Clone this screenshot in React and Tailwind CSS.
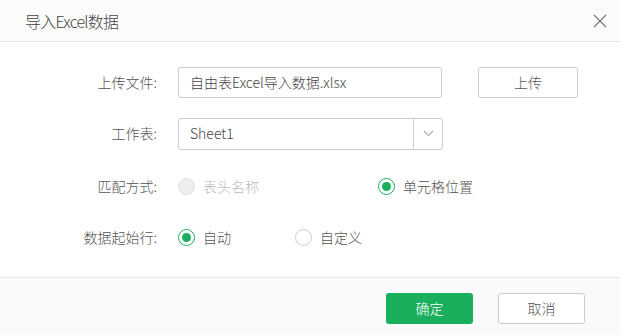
import React, { useState } from 'react';

const font = { fontFamily: '"Noto Sans CJK SC", "Noto Sans", sans-serif' };

const Radio = ({ checked, disabled, label, onClick }) => (
    <button
        type="button"
        onClick={disabled ? undefined : onClick}
        className="flex items-center gap-[8px] h-[31px]"
    >
        <span
            className={
                'flex items-center justify-center w-[17px] h-[17px] rounded-full border ' +
                (disabled
                    ? 'bg-[#eeeeee] border-[#dddddd]'
                    : checked
                        ? 'bg-white border-[#1aaf5d]'
                        : 'bg-white border-[#cccccc]')
            }
        >
            {checked && <span className="w-[9px] h-[9px] rounded-full bg-[#1aaf5d]" />}
        </span>
        <span className={'text-[14px] ' + (disabled ? 'text-[#bbbbbb]' : 'text-[#555555]')}>{label}</span>
    </button>
);

const Label = ({ children }) => (
    <div className="w-[158px] shrink-0 text-right text-[14px] text-[#555555] pr-[1px]">{children}</div>
);

const App = () => {
    const [startRow, setStartRow] = useState('auto');

    return (
        <div className="w-[620px] h-[335px] bg-white flex flex-col font-light" style={font}>
            <div className="h-[42px] shrink-0 flex items-center justify-between pl-[25px] pr-[13px] border-b border-[#e8e8e8] bg-[#fcfcfc]">
                <h2 className="text-[16px] text-[#444444] tracking-[-0.8px]">导入Excel数据</h2>
                <button type="button" className="w-[14px] h-[14px] flex items-center justify-center">
                    <svg width="14" height="14" viewBox="0 0 14 14" fill="none" stroke="#777777" strokeWidth="1.2">
                        <path d="M1 1L13 13M13 1L1 13" />
                    </svg>
                </button>
            </div>

            <div className="flex-1 flex flex-col gap-[20px] pt-[25px]">
                <div className="flex items-center h-[31px]">
                    <Label>上传文件:</Label>
                    <div className="ml-[20px] w-[264px] h-[31px] border border-[#cccccc] rounded-[3px] flex items-center px-[11px] text-[14px] text-[#444444]">
                        自由表Excel导入数据.xlsx
                    </div>
                    <button
                        type="button"
                        className="ml-[36px] w-[100px] h-[31px] border border-[#cccccc] rounded-[3px] bg-white text-[14px] text-[#555555]"
                    >
                        上传
                    </button>
                </div>

                <div className="flex items-center h-[31px]">
                    <Label>工作表:</Label>
                    <div className="ml-[20px] w-[265px] h-[32px] border border-[#cccccc] rounded-[3px] flex items-center text-[14px] text-[#444444]">
                        <span className="flex-1 px-[11px]">Sheet1</span>
                        <span className="w-[29px] h-full border-l border-[#cccccc] flex items-center justify-center">
                            <svg width="11" height="7" viewBox="0 0 11 7" fill="none" stroke="#aaaaaa" strokeWidth="1.1">
                                <path d="M1 1L5.5 5.5L10 1" />
                            </svg>
                        </span>
                    </div>
                </div>

                <div className="flex items-center h-[31px] mt-[2px]">
                    <Label>匹配方式:</Label>
                    <div className="ml-[20px] w-[200px]">
                        <Radio disabled label="表头名称" />
                    </div>
                    <Radio checked label="单元格位置" />
                </div>

                <div className="flex items-center h-[31px]">
                    <Label>数据起始行:</Label>
                    <div className="ml-[20px] w-[117px]">
                        <Radio checked={startRow === 'auto'} label="自动" onClick={() => setStartRow('auto')} />
                    </div>
                    <Radio checked={startRow === 'custom'} label="自定义" onClick={() => setStartRow('custom')} />
                </div>
            </div>

            <div className="h-[58px] shrink-0 border-t border-[#e8e8e8] bg-[#fafafa] flex items-start justify-end gap-[25px] pt-[15px] pr-[35px]">
                <button
                    type="button"
                    className="w-[87px] h-[31px] rounded-[3px] bg-[#1aaf5d] text-white text-[14px]"
                >
                    确定
                </button>
                <button
                    type="button"
                    className="w-[87px] h-[31px] rounded-[3px] bg-white border border-[#cccccc] text-[14px] text-[#555555]"
                >
                    取消
                </button>
            </div>
        </div>
    );
};

export default App;
